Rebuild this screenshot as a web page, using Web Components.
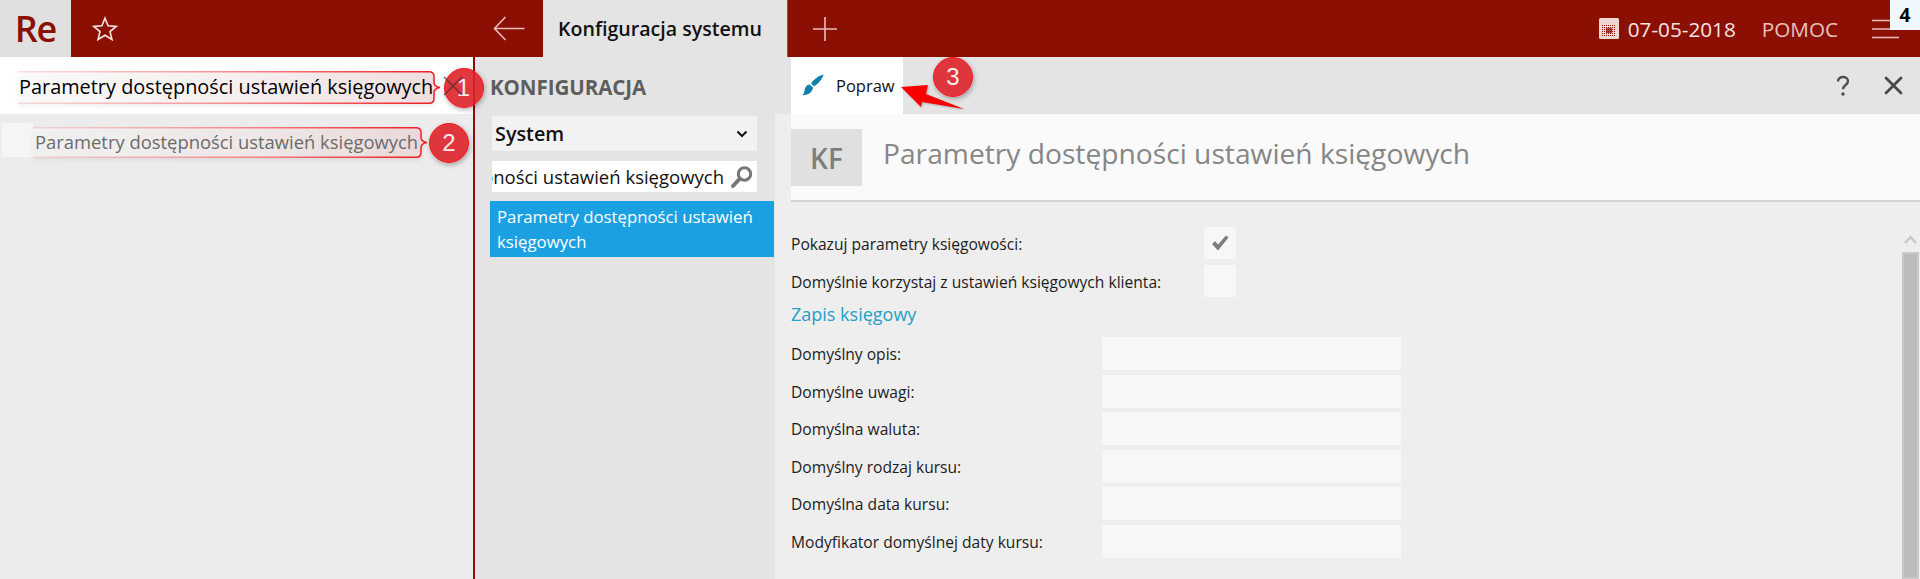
<!DOCTYPE html>
<html lang="pl">
<head>
<meta charset="utf-8">
<style>
  html, body { margin: 0; height: 100%; overflow: hidden; }
  body { font-family: "Open Sans", "Noto Sans", sans-serif; background: #eeeeee; color: #1a1a1a; }
  app-shell { height: 579px; }
</style>
</head>
<body>
<app-shell>
  <top-bar slot="top"></top-bar>
  <search-panel slot="left"></search-panel>
  <config-panel slot="middle"></config-panel>
  <form-panel slot="main"></form-panel>
</app-shell>

<script>
const TEXT = 'Parametry dostępności ustawień księgowych';

class AppShell extends HTMLElement {
  constructor() {
    super();
    this.attachShadow({ mode: 'open' }).innerHTML = `
    <style>
      :host { display: grid; grid-template-columns: 475px 300px 1fr; grid-template-rows: 57px 1fr; overflow: hidden; position: relative; }
      .top { grid-column: 1 / 4; display: block; }
    </style>
    <slot name="top" class="top"></slot>
    <slot name="left"></slot>
    <slot name="middle"></slot>
    <slot name="main"></slot>`;
  }
}

class TopBar extends HTMLElement {
  constructor() {
    super();
    this.attachShadow({ mode: 'open' }).innerHTML = `
    <style>
      :host { display: flex; height: 57px; background: #8b1003; color: #fff; align-items: stretch; position: relative; }
      .logo { width: 71px; background: #e0e0e0; color: #8b1003; font-size: 36px; font-weight: 600; display: flex; align-items: center; justify-content: center; letter-spacing: -1px; }
      .star { width: 68px; display: flex; align-items: center; justify-content: center; }
      .back { margin-left: 335px; width: 69px; display: flex; align-items: center; justify-content: center; }
      .tab { width: 244px; box-sizing: border-box; background: #e4e4e4; color: #111; font-size: 19.6px; font-weight: 600; padding-left: 15px; display: flex; align-items: center; white-space: nowrap; }
      .plus { width: 75px; display: flex; align-items: center; justify-content: center; border-left: 1px solid #a8483f; box-sizing: border-box; }
      .right { margin-left: auto; display: flex; align-items: center; }
      .date { display: flex; align-items: center; gap: 9px; font-size: 20.7px; color: #f4e4e2; margin-right: 26px; }
      .help { font-size: 20.7px; color: #e8c0bc; margin-right: 34px; }
      .menu { margin-right: 20px; display: flex; }
      .badge { position: absolute; top: 0; right: 0; width: 30px; height: 30px; background: #f0f8fd; color: #000; font: 700 19px "Open Sans", sans-serif; display: flex; align-items: center; justify-content: center; }
    </style>
    <div class="logo">Re</div>
    <div class="star">
      <svg width="26" height="26" viewBox="0 0 26 26" fill="none" stroke="#f6e6e4" stroke-width="1.6" stroke-linejoin="miter"><path d="M13 2.200l3.100 7.600 8.100.6-6.200 5.200 2 7.900L13 19.200l-7 4.300 2-7.900-6.200-5.200 8.100-.6z"/></svg>
    </div>
    <div class="back">
      <svg width="32" height="25" viewBox="0 0 32 25" fill="none" stroke="#e8bdb8" stroke-width="1.6"><path d="M31.500 12.500H1.500M12.500 1L1.500 12.500 12.500 24"/></svg>
    </div>
    <div class="tab">Konfiguracja systemu</div>
    <div class="plus">
      <svg width="26" height="26" viewBox="0 0 26 26" fill="none" stroke="#e8bdb8" stroke-width="1.6"><path d="M13 1v24M1 13h24"/></svg>
    </div>
    <div class="right">
      <div class="date">
        <svg width="20" height="21" viewBox="0 0 20 21">
          <defs><pattern id="dots" width="2" height="2" patternUnits="userSpaceOnUse" x="3" y="7"><rect width="1" height="1" fill="#8b1003"/></pattern></defs>
          <rect width="20" height="21" rx="1.500" fill="#eed6d3"/>
          <rect x="3" y="7" width="14" height="11" fill="url(#dots)"/>
          <rect x="7" y="10" width="6" height="5" fill="#8b1003" opacity=".75"/>
        </svg>
        <span>07-05-2018</span>
      </div>
      <div class="help">POMOC</div>
      <div class="menu">
        <svg width="28" height="20" viewBox="0 0 28 20" fill="none" stroke="#e8bdb8" stroke-width="1.400"><path d="M0 1.500h27M0 10h27M0 18.500h27"/></svg>
      </div>
    </div>
    <div class="badge">4</div>`;
  }
}

// numbered red circle from the annotated screenshot
class CalloutMark extends HTMLElement {
  constructor() {
    super();
    this.attachShadow({ mode: 'open' }).innerHTML = `
    <style>
      :host { position: absolute; width: 40px; height: 40px; box-sizing: border-box; border-radius: 50%; background: rgba(222,34,42,.9); border: 1.5px solid #f5181e; color: #fbeaea; font: 400 24px "Liberation Sans", sans-serif; display: flex; align-items: center; justify-content: center; box-shadow: 1px 2px 5px rgba(0,0,0,.3); z-index: 3; }
    </style>
    <span></span>`;
  }
  connectedCallback() { this.shadowRoot.querySelector('span').textContent = this.getAttribute('num'); }
}

// speech box drawn round a text, fading out to the left
class CalloutBox extends HTMLElement {
  connectedCallback() {
    const w = +this.getAttribute('w'), h = +this.getAttribute('h'), m = h / 2;
    const d = `M0 .75H${w - 6}Q${w - 1} .75 ${w - 1} 5.500V${m - 5}Q${w - 1} ${m - 1} ${w + 5} ${m}Q${w - 1} ${m + 1} ${w - 1} ${m + 5}V${h - 5.500}Q${w - 1} ${h - .75} ${w - 6} ${h - .75}H0`;
    this.attachShadow({ mode: 'open' }).innerHTML = `
    <style>
      :host { position: absolute; z-index: 1; display: block; }
      svg { display: block; overflow: visible; filter: drop-shadow(0 2px 2px rgba(0,0,0,.1)); }
    </style>
    <svg width="${w + 6}" height="${h}" viewBox="0 0 ${w + 6} ${h}">
      <defs>
        <linearGradient id="line" gradientUnits="userSpaceOnUse" x1="0" x2="${w}" y1="0" y2="0">
          <stop offset="0" stop-color="#f6a0a0" stop-opacity=".35"/>
          <stop offset=".6" stop-color="#f57a7e"/>
          <stop offset="1" stop-color="#f01c22"/>
        </linearGradient>
        <linearGradient id="fill" gradientUnits="userSpaceOnUse" x1="0" x2="${w}" y1="0" y2="0">
          <stop offset="0" stop-color="#fff" stop-opacity=".5"/>
          <stop offset=".6" stop-color="#f8ecec" stop-opacity=".6"/>
          <stop offset="1" stop-color="#f0d6d6" stop-opacity=".7"/>
        </linearGradient>
      </defs>
      <path d="${d}Z" fill="url(#fill)"/>
      <path d="${d}" fill="none" stroke="url(#line)" stroke-width="1.500"/>
    </svg>`;
  }
}

class SearchPanel extends HTMLElement {
  constructor() {
    super();
    this.attachShadow({ mode: 'open' }).innerHTML = `
    <style>
      :host { display: block; position: relative; height: 522px; background: #ececec; border-right: 2px solid #8b1003; box-sizing: border-box; }
      .search { height: 57px; background: #fff; display: flex; align-items: center; padding: 2px 0 0 19px; box-sizing: border-box; font-size: 19.9px; color: #000; white-space: nowrap; }
      .row-text { position: relative; z-index: 2; }
      .x { position: absolute; left: 443px; top: 19px; z-index: 4; }
      .row { margin: 9px 0 0 2px; height: 34px; background: linear-gradient(#f5f5f5, #f5f5f5) no-repeat 0 0 / 31px 100%; display: flex; align-items: center; padding: 2px 0 0 33px; box-sizing: border-box; white-space: nowrap; font-size: 18.4px; color: #6b6b6b; }
      callout-box.a { left: 18px; top: 14px; }
      callout-box.b { left: 33px; top: 70px; }
      callout-mark.one { left: 443.500px; top: 11px; }
      callout-mark.two { left: 429px; top: 66px; }
    </style>
    <div class="search"><span class="row-text">${TEXT}</span></div>
    <svg class="x" width="20" height="20" viewBox="0 0 20 20" stroke="#4a2a2a" stroke-opacity=".8" stroke-width="1.200"><path d="M1 1l18 18M19 1L1 19"/></svg>
    <div class="row"><span class="row-text">${TEXT}</span></div>
    <callout-box class="a" w="417" h="33"></callout-box>
    <callout-box class="b" w="389" h="31"></callout-box>
    <callout-mark class="one" num="1"></callout-mark>
    <callout-mark class="two" num="2"></callout-mark>`;
  }
}

class ConfigPanel extends HTMLElement {
  constructor() {
    super();
    this.attachShadow({ mode: 'open' }).innerHTML = `
    <style>
      :host { display: block; background: #e4e4e4; height: 522px; padding: 0 0 0 16px; box-sizing: border-box; }
      h2 { margin: 0 0 0 -1px; height: 59px; display: flex; align-items: center; font-size: 20.6px; font-weight: 700; color: #5e5e5e; letter-spacing: -.1px; }
      .select { width: 265px; height: 35px; background: #f2f2f2; display: flex; align-items: center; justify-content: space-between; box-sizing: border-box; padding: 0 9px 0 3px; font-size: 19.8px; font-weight: 600; color: #111; margin-left: 1px; }
      .find { width: 265px; height: 31px; margin: 10px 0 9px 1px; background: #fff; display: flex; align-items: center; font-size: 18.5px; color: #111; white-space: nowrap; overflow: hidden; padding-right: 3px; box-sizing: border-box; gap: 6px; }
      .find span { overflow: hidden; direction: rtl; flex: 1; }
      .find svg { flex: none; }
      .hit { margin-left: -1px; width: 284px; height: 56px; background: #1ba1e2; color: #fff; font-size: 16.8px; line-height: 25px; box-sizing: border-box; padding: 3px 7px; }
    </style>
    <h2>KONFIGURACJA</h2>
    <div class="select">System
      <svg width="12" height="8" viewBox="0 0 12 8" fill="none" stroke="#111" stroke-width="2"><path d="M1.500 1.500L6 6l4.500-4.500"/></svg>
    </div>
    <div class="find"><span><bdi>${TEXT}</bdi></span>
      <svg width="24" height="24" viewBox="0 0 24 24" fill="none"><circle cx="14.500" cy="9" r="6.200" stroke="#777" stroke-width="3"/><path d="M9.500 14L3 21" stroke="#777" stroke-width="4" stroke-linecap="round"/></svg>
    </div>
    <div class="hit">${TEXT}</div>`;
  }
}

class FormRow extends HTMLElement {
  constructor() {
    super();
    this.attachShadow({ mode: 'open' }).innerHTML = `
    <style>
      :host { display: flex; align-items: center; height: 33px; margin-bottom: 4.600px; font-size: 15.6px; color: #1c1c1c; }
      .label { width: 311px; white-space: nowrap; padding-top: 1px; }
      .field { width: 299px; height: 33px; background: #f7f7f7; }
    </style>
    <div class="label"><slot></slot></div><div class="field"></div>`;
  }
}

class CheckRow extends HTMLElement {
  constructor() {
    super();
    this.attachShadow({ mode: 'open' }).innerHTML = `
    <style>
      :host { display: flex; align-items: center; height: 32px; margin-bottom: 6px; font-size: 15.6px; color: #1c1c1c; }
      .label { width: 413px; white-space: nowrap; padding-top: 1px; }
      .box { width: 32px; height: 32px; background: #f7f7f7; display: flex; align-items: center; justify-content: center; }
    </style>
    <div class="label"><slot></slot></div>
    <div class="box" id="box"></div>`;
  }
  connectedCallback() {
    if (this.hasAttribute('checked')) {
      this.shadowRoot.getElementById('box').innerHTML = '<svg width="20" height="18" viewBox="0 0 20 18"><path d="M2 10l3-3 3 3.500L16 1.500l2.500 2L8 16.500z" fill="#7d7d7d"/></svg>';
    }
  }
}

class FormPanel extends HTMLElement {
  constructor() {
    super();
    this.attachShadow({ mode: 'open' }).innerHTML = `
    <style>
      :host { display: block; position: relative; height: 522px; overflow: hidden; background: #eeeeee; }
      .bar { height: 57px; background: #e4e4e4; display: flex; align-items: stretch; padding-left: 16px; }
      .tool { width: 112px; background: #fff; display: flex; align-items: center; gap: 12px; padding-left: 11px; box-sizing: border-box; font-size: 16.5px; color: #111; padding-bottom: 1px; }
      .actions { margin-left: auto; display: flex; align-items: center; gap: 34px; padding-right: 17px; }
      .head { height: 88px; margin-left: 16px; background: #fafafa; border-bottom: 2px solid #d4d4d4; box-sizing: border-box; display: flex; align-items: flex-start; gap: 21px; padding-top: 15px; color: #868686; font-size: 28.2px; white-space: nowrap; }
      .kf { width: 71px; height: 57px; background: #e0e0e0; display: flex; align-items: center; justify-content: center; font-weight: 600; font-size: 28px; color: #7d7d7d; }
      .title { margin-top: 5px; }
      .body { padding: 25px 0 0 16px; }
      h3 { margin: 3px 0 12px; font-size: 18px; font-weight: 400; color: #22a0c8; line-height: 22px; }
      .arrow { position: absolute; left: 126px; top: 27px; filter: drop-shadow(1px 1px 1px rgba(0,0,0,.25)); }
      callout-mark { left: 158px; top: 0; }
      .scroll { position: absolute; right: 1px; top: 177px; width: 17px; bottom: 0; }
      .up { position: absolute; right: 2px; top: 0; }
      .thumb { position: absolute; right: 0; top: 18px; left: 0; bottom: 0; box-sizing: border-box; background: #bcbcbc; border: 2px solid #c9c9c9; }
    </style>
    <div class="bar">
      <div class="tool">
        <svg width="22" height="22" viewBox="0 0 22 22"><path d="M21.500 0.500C17 1.500 12 5 9 9.500L12 12.500C16.500 9.500 20.500 5 21.500 0.500z" fill="#0f81ad"/><path d="M7.500 10.500C4 11 3 14 2.500 17 2 19 1.500 20 0.500 21 5 21.500 10.500 19 11 13.500z" fill="#0f81ad"/></svg>
        <span>Popraw</span>
      </div>
      <div class="actions">
        <svg width="14" height="22" viewBox="0 0 14 22" fill="none"><path d="M2 6.500C2 3.500 4.200 2 7 2s5 1.600 5 4.300c0 3.700-5 3.700-5 8" stroke="#505050" stroke-width="2.400"/><circle cx="7" cy="19" r="1.800" fill="#505050"/></svg>
        <svg width="19" height="19" viewBox="0 0 19 19" stroke="#484848" stroke-width="2.800" stroke-linecap="round"><path d="M2 2l15 15M17 2L2 17"/></svg>
      </div>
    </div>
    <div class="head"><div class="kf">KF</div><div class="title">${TEXT}</div></div>
    <div class="body">
      <check-row checked>Pokazuj parametry księgowości:</check-row>
      <check-row>Domyślnie korzystaj z ustawień księgowych klienta:</check-row>
      <h3>Zapis księgowy</h3>
      <form-row>Domyślny opis:</form-row>
      <form-row>Domyślne uwagi:</form-row>
      <form-row>Domyślna waluta:</form-row>
      <form-row>Domyślny rodzaj kursu:</form-row>
      <form-row>Domyślna data kursu:</form-row>
      <form-row>Modyfikator domyślnej daty kursu:</form-row>
    </div>
    <svg class="arrow" width="64" height="26" viewBox="0 0 64 26"><path d="M0 3L27 1 25 10 63 25 21 18 20 23z" fill="#f90000"/></svg>
    <callout-mark num="3"></callout-mark>
    <div class="scroll">
      <svg class="up" width="13" height="10" viewBox="0 0 13 10" fill="none" stroke="#c8c8c8" stroke-width="2.400"><path d="M1 9l5.500-6L12 9"/></svg>
      <div class="thumb"></div>
    </div>`;
  }
}

customElements.define('app-shell', AppShell);
customElements.define('top-bar', TopBar);
customElements.define('callout-mark', CalloutMark);
customElements.define('callout-box', CalloutBox);
customElements.define('search-panel', SearchPanel);
customElements.define('config-panel', ConfigPanel);
customElements.define('form-row', FormRow);
customElements.define('check-row', CheckRow);
customElements.define('form-panel', FormPanel);
</script>
</body>
</html>
